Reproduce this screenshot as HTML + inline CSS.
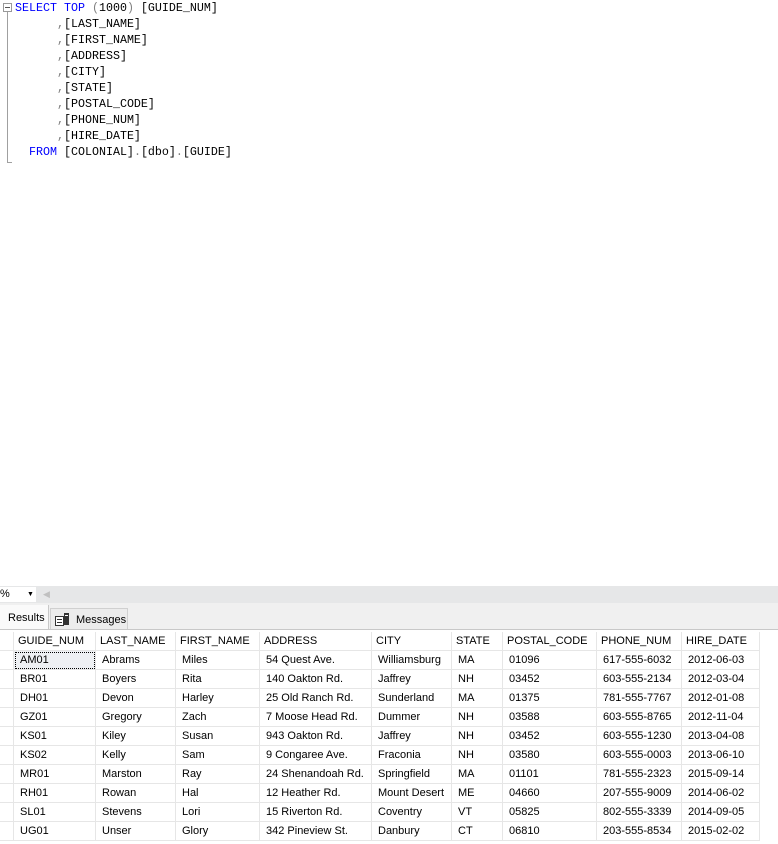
<!DOCTYPE html>
<html><head><meta charset="utf-8"><style>
body{margin:0;width:778px;height:844px;background:#fff;position:relative;overflow:hidden;font-family:"Liberation Sans",Arial,sans-serif}
.code{position:absolute;left:15px;top:0;font-family:"Liberation Mono",monospace;font-size:11.67px;line-height:16px;white-space:pre;color:#000}
.k{color:#0000ff}.g{color:#808080}.r{color:#800000}
.box{position:absolute;left:3px;top:3px;width:7px;height:7px;border:1px solid #999;background:#fff}
.box:after{content:"";position:absolute;left:1px;top:3px;width:5px;height:1px;background:#555}
.vl{position:absolute;left:7px;top:12px;width:1px;height:151px;background:#a0a0a0}
.vl2{position:absolute;left:7px;top:162px;width:5px;height:1px;background:#a0a0a0}
.bar{position:absolute;left:0;top:586px;width:778px;height:17px;background:#e6e7e8}
.zoom{position:absolute;left:0;top:587px;width:36px;height:15px;background:#fff;font-size:11px;line-height:15px}
.tabs{position:absolute;left:0;top:603px;width:778px;height:26px;background:#f0f0f0;border-bottom:1px solid #c8c8c8}
.t1{position:absolute;left:0;top:605px;width:49px;height:24px;background:#fafafa;border-right:1px solid #c8c8c8;font-size:11px;line-height:26px;padding-left:8px;box-sizing:border-box}
.t2{position:absolute;left:50px;top:608px;width:78px;height:21px;background:#ececec;border:1px solid #d0d0d0;border-bottom:none;box-sizing:border-box;font-size:11px;line-height:22px;padding-left:25px}
table{position:absolute;left:0;top:632px;border-collapse:collapse;font-size:11px}
td,th{height:18px;border:1px solid #e6e6e6;padding:0 0 0 6px;text-align:left;white-space:nowrap;overflow:hidden}
tr:first-child th{border-top:none}
td:first-child,th:first-child{border-left:none}
th{font-weight:normal;font-size:11px;padding-left:4px;height:18px}
td.h{padding:0}
</style></head><body>
<div class="box"></div><div class="vl"></div><div class="vl2"></div>
<div class="code"><span class="k">SELECT TOP</span> <span class="g">(</span>1000<span class="g">)</span> [GUIDE_NUM]
      <span class="g">,</span>[LAST_NAME]
      <span class="g">,</span>[FIRST_NAME]
      <span class="g">,</span>[ADDRESS]
      <span class="g">,</span>[CITY]
      <span class="g">,</span>[STATE]
      <span class="g">,</span>[POSTAL_CODE]
      <span class="g">,</span>[PHONE_NUM]
      <span class="g">,</span>[HIRE_DATE]
  <span class="k">FROM</span> [COLONIAL]<span class="g">.</span>[dbo]<span class="g">.</span>[GUIDE]</div>
<div class="bar"></div>
<div class="zoom">%<span style="position:absolute;left:27px;top:0;font-size:7px">▼</span></div>
<div style="position:absolute;left:43px;top:589px;color:#c0c0c0;font-size:9px">◀</div>
<div class="tabs"></div>
<div class="t1">Results</div>
<div class="t2"><svg style="position:absolute;left:4px;top:4px" width="16" height="14"><rect x="0.5" y="3.5" width="8" height="9" fill="#fff" stroke="#333"/><line x1="2" y1="6.5" x2="7" y2="6.5" stroke="#333"/><line x1="2" y1="9.5" x2="7" y2="9.5" stroke="#333"/><rect x="9" y="0" width="5" height="12" fill="#333"/><rect x="10" y="2" width="3" height="1" fill="#fff"/></svg>Messages</div>
<table>
<tr><th style="width:13px;padding:0"></th><th style="width:77px">GUIDE_NUM</th><th style="width:75px">LAST_NAME</th><th style="width:79px">FIRST_NAME</th><th style="width:107px">ADDRESS</th><th style="width:75px">CITY</th><th style="width:46px">STATE</th><th style="width:89px">POSTAL_CODE</th><th style="width:80px">PHONE_NUM</th><th style="width:73px">HIRE_DATE</th></tr>
<tr><td class="h"></td><td style="outline:1px dotted #000;outline-offset:-2px;background:#eef0f3">AM01</td><td>Abrams</td><td>Miles</td><td>54 Quest Ave.</td><td>Williamsburg</td><td>MA</td><td>01096</td><td>617-555-6032</td><td>2012-06-03</td></tr>
<tr><td class="h"></td><td>BR01</td><td>Boyers</td><td>Rita</td><td>140 Oakton Rd.</td><td>Jaffrey</td><td>NH</td><td>03452</td><td>603-555-2134</td><td>2012-03-04</td></tr>
<tr><td class="h"></td><td>DH01</td><td>Devon</td><td>Harley</td><td>25 Old Ranch Rd.</td><td>Sunderland</td><td>MA</td><td>01375</td><td>781-555-7767</td><td>2012-01-08</td></tr>
<tr><td class="h"></td><td>GZ01</td><td>Gregory</td><td>Zach</td><td>7 Moose Head Rd.</td><td>Dummer</td><td>NH</td><td>03588</td><td>603-555-8765</td><td>2012-11-04</td></tr>
<tr><td class="h"></td><td>KS01</td><td>Kiley</td><td>Susan</td><td>943 Oakton Rd.</td><td>Jaffrey</td><td>NH</td><td>03452</td><td>603-555-1230</td><td>2013-04-08</td></tr>
<tr><td class="h"></td><td>KS02</td><td>Kelly</td><td>Sam</td><td>9 Congaree Ave.</td><td>Fraconia</td><td>NH</td><td>03580</td><td>603-555-0003</td><td>2013-06-10</td></tr>
<tr><td class="h"></td><td>MR01</td><td>Marston</td><td>Ray</td><td>24 Shenandoah Rd.</td><td>Springfield</td><td>MA</td><td>01101</td><td>781-555-2323</td><td>2015-09-14</td></tr>
<tr><td class="h"></td><td>RH01</td><td>Rowan</td><td>Hal</td><td>12 Heather Rd.</td><td>Mount Desert</td><td>ME</td><td>04660</td><td>207-555-9009</td><td>2014-06-02</td></tr>
<tr><td class="h"></td><td>SL01</td><td>Stevens</td><td>Lori</td><td>15 Riverton Rd.</td><td>Coventry</td><td>VT</td><td>05825</td><td>802-555-3339</td><td>2014-09-05</td></tr>
<tr><td class="h"></td><td>UG01</td><td>Unser</td><td>Glory</td><td>342 Pineview St.</td><td>Danbury</td><td>CT</td><td>06810</td><td>203-555-8534</td><td>2015-02-02</td></tr>
</table>
</body></html>
